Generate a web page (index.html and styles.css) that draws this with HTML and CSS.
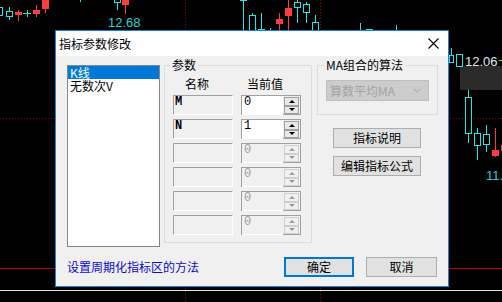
FILE: index.html
```html
<!DOCTYPE html>
<html lang="zh">
<head>
  <meta charset="UTF-8" />
  <title>指标参数修改</title>
  <link rel="stylesheet" href="styles.css">
</head>
<body>

<div class="screen">
  <!-- 背景K线图 -->
  <svg class="chart" width="502" height="302" viewBox="0 0 502 302" shape-rendering="crispEdges">
    <g stroke="#a00000" stroke-dasharray="1 2" fill="none">
      <line x1="185.5" y1="0" x2="185.5" y2="302"/>
      <line x1="320.5" y1="0" x2="320.5" y2="302"/>
      <line x1="0" y1="118.5" x2="502" y2="118.5"/>
    </g>
    <line x1="0" y1="268.5" x2="502" y2="268.5" stroke="#c00000"/>
    <line x1="0" y1="290.5" x2="502" y2="290.5" stroke="#e0e0e0"/>
    <rect x="460" y="66" width="42" height="24" fill="#2b2b2b"/>

    <g stroke="#1ee6e6" fill="none">
      <rect x="-3.5" y="7.5" width="6" height="8"/>
      <rect x="6.5" y="11.5" width="6" height="5"/>
      <path d="M9.5 7v4M9.5 17v3"/>
      <path d="M23 13.5h8M27.5 10v7"/>
      <path d="M80.5 0v2"/>
      <rect x="114.5" y="-1.5" width="6" height="4"/>
      <path d="M117.5 3v7"/>
      <path d="M240 0.5h7M243.5 0v30"/>
      <rect x="249.5" y="15.5" width="6" height="16"/>
      <path d="M252.5 13v2"/>
      <path d="M261.5 13v17M258 29.5h7"/>
      <path d="M270.5 28v2"/>
      <rect x="294.5" y="2.5" width="6" height="5"/>
      <path d="M297.5 0v2M297.5 8v15"/>
      <rect x="303.5" y="4.5" width="6" height="8"/>
      <path d="M306.5 2v2M306.5 13v10"/>
      <rect x="312.5" y="22.5" width="6" height="9"/>
      <path d="M315.5 15v7"/>
      <path d="M360.5 23v7M366 29.5h7M396.5 25v5"/>
      <rect x="449.5" y="55.5" width="4" height="7"/>
      <path d="M451.5 48v7"/>
      <rect x="456.5" y="54.5" width="6" height="12"/>
      <path d="M499 60.5h3"/>
      <rect x="465.5" y="97.5" width="6" height="36"/>
      <path d="M468.5 90v7M468.5 134v9"/>
      <rect x="474.5" y="133.5" width="6" height="12"/>
      <path d="M477.5 128v5M477.5 146v14"/>
      <rect x="483.5" y="134.5" width="6" height="10"/>
      <path d="M486.5 125v9M486.5 145v7"/>
    </g>

    <g stroke="#ff3b3b">
      <path d="M18.5 10v11M36.5 5v12M45.5 0v13M125.5 0v14M279.5 13v17M288.5 0v30M495.5 128v29"/>
    </g>
    <g fill="#ff3b3b">
      <rect x="15" y="12" width="7" height="3"/>
      <rect x="33" y="10" width="7" height="4"/>
      <rect x="42" y="0" width="7" height="9"/>
      <rect x="122" y="0" width="7" height="5"/>
      <rect x="276" y="19" width="7" height="5"/>
      <rect x="285" y="8" width="7" height="8"/>
      <rect x="492" y="150" width="7" height="6"/>
      <rect x="501" y="145" width="2" height="6"/>
    </g>

    <text class="price cyan" x="108" y="27">12.68</text>
    <text class="price light" x="465" y="66">12.06</text>
    <text class="price cyan" x="486" y="180">11.</text>
  </svg>

  <!-- 对话框 -->
  <div class="dialog">
    <div class="titlebar">
      <span class="title">指标参数修改</span>
      <svg class="close" width="11" height="11" viewBox="0 0 11 11">
        <path d="M0.5 0.5L10.5 10.5M10.5 0.5L0.5 10.5" stroke="#000" stroke-width="1.1" fill="none"/>
      </svg>
    </div>

    <div class="dlg-body">
      <div class="main">
        <ul class="list">
          <li class="selected">K线</li>
          <li>无数次V</li>
        </ul>

        <fieldset class="group params">
          <legend>参数</legend>
          <div class="param-grid">
            <div class="head head-name">名称</div>
            <div class="head head-value">当前值</div>

            <div class="field">M</div>
            <div class="spin">
              <div class="spin-edit">0</div>
              <div class="spin-btns"><span class="up"></span><span class="down"></span></div>
            </div>

            <div class="field">N</div>
            <div class="spin">
              <div class="spin-edit">1</div>
              <div class="spin-btns"><span class="up"></span><span class="down"></span></div>
            </div>

            <div class="field"></div>
            <div class="spin off">
              <div class="spin-edit">0</div>
              <div class="spin-btns"><span class="up"></span><span class="down"></span></div>
            </div>

            <div class="field"></div>
            <div class="spin off">
              <div class="spin-edit">0</div>
              <div class="spin-btns"><span class="up"></span><span class="down"></span></div>
            </div>

            <div class="field"></div>
            <div class="spin off">
              <div class="spin-edit">0</div>
              <div class="spin-btns"><span class="up"></span><span class="down"></span></div>
            </div>

            <div class="field"></div>
            <div class="spin off">
              <div class="spin-edit">0</div>
              <div class="spin-btns"><span class="up"></span><span class="down"></span></div>
            </div>
          </div>
        </fieldset>

        <div class="side">
          <fieldset class="group ma">
            <legend>MA组合的算法</legend>
            <div class="combo">
              <span>算数平均MA</span>
              <svg width="8" height="5" viewBox="0 0 8 5"><path d="M0.5 0.5L4 4L7.5 0.5" stroke="#a6a6a6" fill="none"/></svg>
            </div>
          </fieldset>
          <button class="btn side-btn first">指标说明</button>
          <button class="btn side-btn">编辑指标公式</button>
        </div>
      </div>

      <div class="footer">
        <a class="link">设置周期化指标区的方法</a>
        <div class="actions">
          <button class="btn ok">确定</button>
          <button class="btn cancel">取消</button>
        </div>
      </div>
    </div>
  </div>
</div>

</body>
</html>
```

FILE: styles.css
```css
/* 基础 */
* {
  box-sizing: border-box;
}
body {
  margin: 0;
  background: #000;
  overflow: hidden;
  font-family: "Noto Sans CJK SC", sans-serif;
  font-size: 12px;
  color: #000;
}
.screen {
  position: relative;
  width: 502px;
  height: 302px;
}

/* 背景图表 */
.chart {
  position: absolute;
  left: 0;
  top: 0;
}
.price {
  font-family: "Liberation Sans", sans-serif;
  font-size: 13px;
}
.cyan { fill: #22d4d4; }
.light { fill: #e6e6e6; }

/* 对话框 */
.dialog {
  position: absolute;
  left: 55px;
  top: 30px;
  width: 394px;
  height: 257px;
  border: 1px solid #1883d7;
  background: #f0f0f0;
}
.titlebar {
  height: 25px;
  background: #fff;
  display: flex;
  align-items: center;
  justify-content: space-between;
  padding: 0 9px 0 3px;
}
.title {
  line-height: 14px;
}
.close {
  display: block;
}
.dlg-body {
  height: 230px;
  padding: 2px 10px 0 11px;
}
.main {
  display: flex;
  align-items: flex-start;
  height: 189px;
}

/* 左侧列表 */
.list {
  list-style: none;
  margin: 7px 0 0;
  padding: 0;
  width: 93px;
  height: 182px;
  background: #fff;
  border: 1px solid #828790;
}
.list li {
  height: 13px;
  line-height: 13px;
  padding-left: 2px;
  white-space: nowrap;
}
.list li.selected {
  background: #0078d7;
  color: #fff;
}

/* 分组框 */
.group {
  margin: 0;
  border: 1px solid #dcdcdc;
  min-width: 0;
}
.group legend {
  font-size: 12px;
  line-height: 14px;
  padding: 0 2px;
}
.params {
  width: 148px;
  margin-left: 4px;
  padding: 5px 8px 7px;
}
.params legend {
  margin-left: -3px;
}
.param-grid {
  display: grid;
  grid-template-columns: 60px 60px;
  grid-template-rows: 14px repeat(6, 20px);
  column-gap: 8px;
  row-gap: 4px;
}
.head {
  line-height: 14px;
  white-space: nowrap;
}
.head-name { padding-left: 12px; }
.head-value { padding-left: 6px; }

/* 参数名称 */
.field {
  height: 20px;
  background: #f0f0f0;
  border-top: 1px solid #a0a0a0;
  border-left: 1px solid #a0a0a0;
  border-right: 1px solid #fff;
  border-bottom: 1px solid #fff;
  padding-left: 1px;
  font-family: "Liberation Mono", monospace;
  font-weight: bold;
  font-size: 12px;
  line-height: 13px;
}

/* 数值微调框 */
.spin {
  display: flex;
  height: 20px;
  border-top: 1px solid #a0a0a0;
  border-left: 1px solid #a0a0a0;
}
.spin-edit {
  flex: 1;
  background: #fff;
  border-bottom: 1px solid #fff;
  padding-left: 2px;
  font-family: "Liberation Mono", monospace;
  font-size: 12px;
  line-height: 13px;
}
.spin-btns {
  width: 18px;
  display: flex;
  flex-direction: column;
  background: #f0f0f0;
  border-right: 1px solid #a0a0a0;
  border-bottom: 1px solid #a0a0a0;
  padding: 1px 1px 0 1px;
}
.spin-btns span {
  flex: 1;
  display: flex;
  align-items: center;
  justify-content: center;
  border: 1px solid #a0a0a0;
  background: #e8e8e8;
}
.spin-btns span::after {
  content: "";
  border-left: 3px solid transparent;
  border-right: 3px solid transparent;
}
.spin-btns .up::after {
  border-bottom: 3px solid #000;
}
.spin-btns .down::after {
  border-top: 3px solid #000;
}
.spin.off .spin-edit {
  background: #f0f0f0;
  color: #a0a0a0;
}
.spin.off .spin-btns span {
  border-color: #cfcfcf;
  background: #f0f0f0;
}
.spin.off .up::after { border-bottom-color: #9a9a9a; }
.spin.off .down::after { border-top-color: #9a9a9a; }

/* 右侧 */
.side {
  width: 121px;
  margin-left: 5px;
  display: flex;
  flex-direction: column;
  align-items: flex-start;
}
.ma {
  width: 121px;
  padding: 8px 8px 13px;
}
.ma legend {
  margin-left: -2px;
}
.combo {
  height: 21px;
  background: #ccc;
  border: 1px solid #bfbfbf;
  display: flex;
  align-items: center;
  justify-content: space-between;
  padding: 0 7px 0 3px;
  color: #a3a3a3;
  white-space: nowrap;
}
.combo svg {
  display: block;
}

/* 按钮 */
.btn {
  height: 20px;
  padding: 0;
  background: #e1e1e1;
  border: 1px solid #adadad;
  font-family: inherit;
  font-size: 12px;
  line-height: 14px;
  color: #000;
}
.side-btn {
  width: 88px;
  margin: 8px 0 0 16px;
}
.side-btn.first {
  margin-top: 13px;
}
.footer {
  display: flex;
  align-items: center;
  justify-content: space-between;
  height: 20px;
  margin-top: 10px;
}
.link {
  color: #0a0ad0;
  line-height: 14px;
}
.actions {
  display: flex;
  gap: 12px;
  margin-right: 1px;
}
.ok {
  width: 70px;
  border: 2px solid #0078d7;
}
.cancel {
  width: 71px;
}
```
